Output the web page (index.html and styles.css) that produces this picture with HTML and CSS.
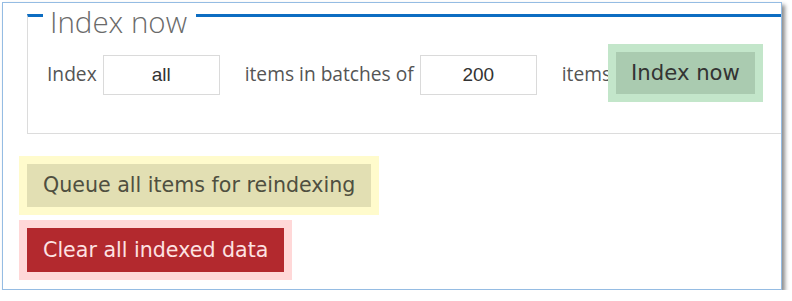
FILE: index.html
```html
<!DOCTYPE html>
<html lang="en">
<head>
    <meta charset="UTF-8">
    <meta name="viewport" content="width=device-width, initial-scale=1.0">
    <title>Index now</title>
    <link rel="stylesheet" href="styles.css">
</head>
<body>
    <div class="panel">
        <fieldset class="index-box">
            <legend>Index now</legend>
            <div class="index-row">
                <span class="label">Index</span>
                <input class="field" type="text" value="all">
                <span class="label">items in batches of</span>
                <input class="field" type="text" value="200">
                <span class="label">items</span>
                <button class="button green">Index now</button>
            </div>
        </fieldset>
        <div class="actions">
            <button class="button yellow">Queue all items for reindexing</button>
            <button class="button red">Clear all indexed data</button>
        </div>
    </div>
</body>
</html>
```

FILE: styles.css
```css
body { margin: 0; padding: 2px 0 0 2px; background: #fff; font-family: 'Open Sans', sans-serif; }

.panel {
    width: 780px;
    box-sizing: border-box;
    border: 1px solid #95bce3;
    background: #fff;
    padding: 0 0 17px 24px;
    overflow: hidden;
    box-shadow: 3px 3px 4px rgba(0,0,0,0.45);
}

.index-box {
    margin: 0 -20px 0 0;
    padding: 24px 0 38px 19px;
    border: 1px solid #dcdcdc;
    border-top: 3px solid #0d6dc2;
}
.index-box legend {
    margin-left: -4px;
    padding: 13px 9px 0 7px;
    line-height: 12px;
    font-size: 29.5px;
    font-weight: 300;
    color: #6a6a6a;
}

.index-row { display: flex; align-items: flex-start; gap: 6px; }
.label { margin-top: 8px; font-size: 19.2px; color: #555; }
.field {
    width: 117px;
    height: 40px;
    box-sizing: border-box;
    margin: 3px 19px 0 0;
    border: 1px solid #dadada;
    text-align: center;
    font-family: 'Liberation Sans', Arial, sans-serif;
    font-size: 19px;
    color: #333;
}

.button {
    font-family: 'DejaVu Sans', Verdana, sans-serif;
    font-size: 20.6px;
    line-height: 24px;
    padding: 10px 16px;
    border: none;
    cursor: pointer;
}
.green { margin-left: -1px; font-size: 21.2px; line-height: 22px; padding: 10px 15px; background: #aacbb0; color: #333; box-shadow: 0 0 0 8px #c3e6ca; }
.yellow { padding: 9px 16px 10px; background: #e2dfb3; color: #4f4f40; box-shadow: 0 0 0 8px #fffbcc; }
.red { background: #b3292e; color: #fde2e2; box-shadow: 0 0 0 8px #ffd8d8; }

.actions { display: flex; flex-direction: column; align-items: flex-start; gap: 21px; margin-top: 30px; }
```
